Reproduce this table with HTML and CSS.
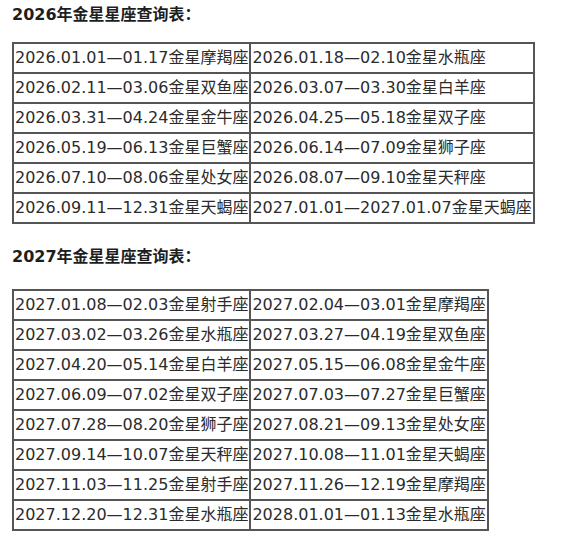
FILE: index.html
```html
<!DOCTYPE html>
<html lang="zh">
<head>
<meta charset="utf-8">
<link rel="stylesheet" href="styles.css">
</head>
<body>
<div class="page">
  <h2 class="title">2026年金星星座查询表：</h2>
  <table class="tbl">
    <tr><td>2026.01.01—01.17金星摩羯座</td><td>2026.01.18—02.10金星水瓶座</td></tr>
    <tr><td>2026.02.11—03.06金星双鱼座</td><td>2026.03.07—03.30金星白羊座</td></tr>
    <tr><td>2026.03.31—04.24金星金牛座</td><td>2026.04.25—05.18金星双子座</td></tr>
    <tr><td>2026.05.19—06.13金星巨蟹座</td><td>2026.06.14—07.09金星狮子座</td></tr>
    <tr><td>2026.07.10—08.06金星处女座</td><td>2026.08.07—09.10金星天秤座</td></tr>
    <tr><td>2026.09.11—12.31金星天蝎座</td><td>2027.01.01—2027.01.07金星天蝎座</td></tr>
  </table>
  <h2 class="title second">2027年金星星座查询表：</h2>
  <table class="tbl">
    <tr><td>2027.01.08—02.03金星射手座</td><td>2027.02.04—03.01金星摩羯座</td></tr>
    <tr><td>2027.03.02—03.26金星水瓶座</td><td>2027.03.27—04.19金星双鱼座</td></tr>
    <tr><td>2027.04.20—05.14金星白羊座</td><td>2027.05.15—06.08金星金牛座</td></tr>
    <tr><td>2027.06.09—07.02金星双子座</td><td>2027.07.03—07.27金星巨蟹座</td></tr>
    <tr><td>2027.07.28—08.20金星狮子座</td><td>2027.08.21—09.13金星处女座</td></tr>
    <tr><td>2027.09.14—10.07金星天秤座</td><td>2027.10.08—11.01金星天蝎座</td></tr>
    <tr><td>2027.11.03—11.25金星射手座</td><td>2027.11.26—12.19金星摩羯座</td></tr>
    <tr><td>2027.12.20—12.31金星水瓶座</td><td>2028.01.01—01.13金星水瓶座</td></tr>
  </table>
</div>
</body>
</html>
```
FILE: styles.css
```css
html, body {
  margin: 0;
  padding: 0;
  background: #fff;
}
.page {
  padding: 3px 12px 0 12px;
  font-family: "DejaVu Sans", "Noto Sans CJK SC", sans-serif;
  color: #2b2b2b;
  font-size: 16px;
}
.title {
  margin: 0 0 15px 0;
  font-size: 16px;
  line-height: 24px;
  font-weight: bold;
  color: #1e1e1e;
}
.title.second {
  margin-top: 21px;
  margin-bottom: 20px;
}
.tbl {
  border-collapse: collapse;
}
.tbl td {
  border: 2px solid #555;
  padding: 4px 1px 4px 1px;
  line-height: 20px;
  white-space: nowrap;
}
```
